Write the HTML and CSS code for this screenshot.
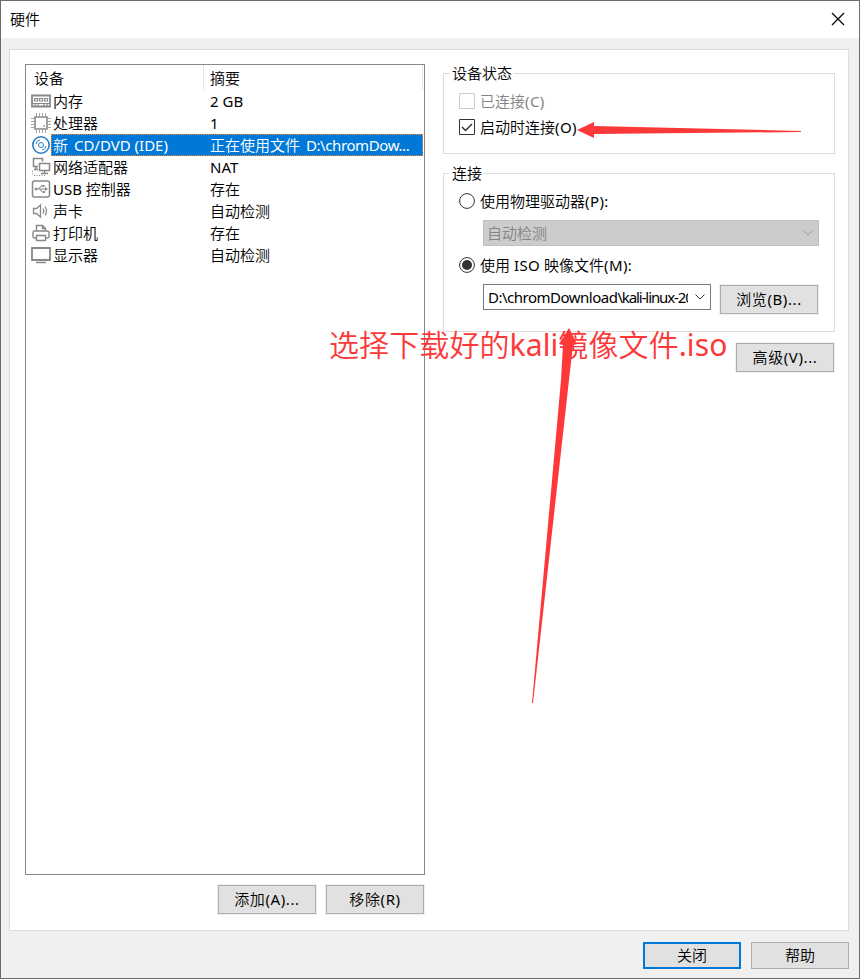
FILE: index.html
```
<!DOCTYPE html>
<html lang="zh-CN">

<head>
    <meta charset="UTF-8">
    <meta name="viewport" content="width=device-width, initial-scale=1.0">
    <title>硬件</title>
    <link rel="stylesheet" href="styles.css">
</head>

<body>
    <div class="window">
        <div class="titlebar">
            <span>硬件</span>
            <svg class="close" width="14" height="14" viewBox="0 0 14 14"><path d="M1 1l12 12M13 1L1 13"/></svg>
        </div>

        <div class="panel">
            <div class="left">
                <div class="device-list">
                    <div class="list-header">
                        <div class="col-device">设备</div>
                        <div class="col-summary">摘要</div>
                    </div>
                    <div class="row">
                        <svg class="icon" width="20" height="20" viewBox="0 0 20 20"><path d="M1 4.500h18v11H1z" stroke-width="1.800"/><path d="M1 12.500h18M4 13v2M7 13v2M13 13v2M16 13v2" stroke-width="1.200"/><path d="M3.500 7.500h3v2.500h-3zM8.500 7.500h3v2.500h-3zM13.500 7.500h3v2.500h-3z" stroke-width="1.200"/></svg>
                        <div class="name">内存</div>
                        <div class="summary">2 GB</div>
                    </div>
                    <div class="row">
                        <svg class="icon" width="20" height="20" viewBox="0 0 20 20"><path d="M4 4h12v12H4z" stroke-width="1.600"/><path d="M5.500 0v3M8.500 0v3M11.500 0v3M14.500 0v3M5.500 17v3M8.500 17v3M11.500 17v3M14.500 17v3M0 5.500h3M0 8.500h3M0 11.500h3M0 14.500h3M17 5.500h3M17 8.500h3M17 11.500h3M17 14.500h3" stroke-width="1" stroke-opacity=".75"/><circle cx="13" cy="13" r=".5"/></svg>
                        <div class="name">处理器</div>
                        <div class="summary">1</div>
                    </div>
                    <div class="row selected">
                        <svg class="icon" width="20" height="20" viewBox="0 0 20 20"><circle cx="10" cy="10" r="8.200" stroke-width="1.600"/><circle cx="10" cy="10" r="2.500"/><path d="M5 9a5 5 0 0 1 4-4M11 15a5 5 0 0 0 4-4" /></svg>
                        <div class="name">新 <span class="cd">CD/DVD (IDE)</span></div>
                        <div class="summary">正在使用文件 <span class="path">D:\chromDow...</span></div>
                    </div>
                    <div class="row">
                        <svg class="icon" width="20" height="20" viewBox="0 0 20 20"><path d="M7 9.500H2.500V1.500h9v3M5 10v3M3 12.500h4" stroke-width="1.500"/><path d="M8.500 6.500h10v7h-10zM13.500 14v2.500M10 16.500h7" stroke-width="1.500"/><path d="M1.500 14v5M3 18.500h11" stroke-dasharray="1 1.500"/></svg>
                        <div class="name">网络适配器</div>
                        <div class="summary">NAT</div>
                    </div>
                    <div class="row">
                        <svg class="icon" width="20" height="20" viewBox="0 0 20 20"><rect x="1.500" y="2" width="17" height="16" rx="2" stroke-width="1.500"/><path d="M5 10h9M7.500 10l2.500-3h2M9 10l2 3h2"/><path d="M14 8l3 2-3 2zM11.500 6h2v2h-2zM12 12h2v2h-2z" fill="#888" stroke="none"/><circle cx="5" cy="10" r="1" fill="#888"/></svg>
                        <div class="name">USB 控制器</div>
                        <div class="summary">存在</div>
                    </div>
                    <div class="row">
                        <svg class="icon" width="20" height="20" viewBox="0 0 20 20"><path d="M2.500 7.500h3l4-3.500v12l-4-3.500h-3z" stroke-width="1.300"/><path d="M12 7.500q1.800 2.500 0 5M14 5.500q3 4.500 0 9" stroke-width="1.200"/></svg>
                        <div class="name">声卡</div>
                        <div class="summary">自动检测</div>
                    </div>
                    <div class="row">
                        <svg class="icon" width="20" height="20" viewBox="0 0 20 20"><path d="M5.500 8V2.500h6l3 3V8M11.500 2.500v3h3M5 15H3.500q-1.500 0-1.500-1.500v-4Q2 8 3.500 8h13q1.500 0 1.500 1.500v4q0 1.500-1.500 1.500H15M5.500 12.500h9v5h-9z" stroke-width="1.400"/></svg>
                        <div class="name">打印机</div>
                        <div class="summary">存在</div>
                    </div>
                    <div class="row">
                        <svg class="icon" width="20" height="20" viewBox="0 0 20 20"><path d="M1 3h18v12H1z" stroke-width="1.800"/><path d="M5 17.500h10" stroke-width="1.500"/></svg>
                        <div class="name">显示器</div>
                        <div class="summary">自动检测</div>
                    </div>
                </div>
                <div class="list-buttons">
                    <button class="framed">添加(A)...</button>
                    <button class="framed">移除(R)</button>
                </div>
            </div>

            <div class="right">
                <fieldset class="status">
                    <legend>设备状态</legend>
                    <label class="option disabled">
                        <svg width="16" height="16" viewBox="0 0 16 16"><path d="M.5.5h15v15H.5z"/></svg>
                        <span>已连接<span class="key">(C)</span></span>
                    </label>
                    <label class="option">
                        <svg width="16" height="16" viewBox="0 0 16 16"><path d="M.5.5h15v15H.5z"/><path d="M3 8l3.500 3.500L13 5" stroke-width="1.500"/></svg>
                        <span>启动时连接<span class="key">(O)</span></span>
                    </label>
                </fieldset>

                <fieldset class="connection">
                    <legend>连接</legend>
                    <label class="option">
                        <svg width="16" height="16" viewBox="0 0 16 16"><circle cx="8" cy="8" r="7.400"/></svg>
                        <span>使用物理驱动器<span class="key">(P):</span></span>
                    </label>
                    <div class="combo off">
                        <span>自动检测</span>
                        <svg width="10" height="6" viewBox="0 0 10 6"><path d="M.5.5L5 5 9.500.5"/></svg>
                    </div>
                    <label class="option">
                        <svg width="16" height="16" viewBox="0 0 16 16"><circle cx="8" cy="8" r="7.400"/><circle cx="8" cy="8" r="5" fill="#333" stroke="none"/></svg>
                        <span>使用 <span class="key">ISO</span> 映像文件<span class="key">(M):</span></span>
                    </label>
                    <div class="iso-row">
                        <div class="combo">
                            <span class="value">D:\chromDownload<span class="file">\kali-linux-20</span></span>
                            <svg width="10" height="6" viewBox="0 0 10 6"><path d="M.5.5L5 5 9.500.5"/></svg>
                        </div>
                        <button class="framed">浏览(B)...</button>
                    </div>
                </fieldset>
                <button class="framed advanced">高级(V)...</button>
            </div>
        </div>

        <div class="footer">
            <button class="default">关闭</button>
            <button>帮助</button>
        </div>
    </div>

    <!-- red annotations over the dialog -->
    <div class="note">选择下载好的kali镜像文件.iso</div>
    <svg class="arrows" width="860" height="979" viewBox="0 0 860 979">
        <path d="M577 130l17-8v4l207 5v1l-207 2v4z"/>
        <path d="M569 328l8 16-4 1-4 35-36 323h-1l29-323 2-35-4-1z"/>
    </svg>
</body>

</html>
```

FILE: styles.css
```
* {
    box-sizing: border-box;
}

body {
    margin: 0;
    position: relative;
    font-family: "Noto Sans", "Noto Sans CJK SC DemiLight", "Noto Sans CJK SC", sans-serif;
    font-size: 15px;
    line-height: 22px;
    color: #000;
}

svg {
    display: block;
    flex: none;
    fill: none;
    stroke: #333;
}

.window {
    display: flex;
    flex-direction: column;
    width: 860px;
    height: 979px;
    border: 1px solid #6b6b6b;
    background-color: #f0f0f0;
    overflow: hidden;
}

.titlebar {
    display: flex;
    justify-content: space-between;
    align-items: center;
    height: 37px;
    padding: 0 14px 1px 9px;
    background-color: #fff;
}

.close {
    stroke: #000;
    stroke-width: 1.2;
}

.panel {
    display: flex;
    gap: 18px;
    width: 840px;
    height: 882px;
    margin: 11px 0 0 8px;
    padding: 14px 13px 0 15px;
    border: 1px solid #dcdcdc;
    background-color: #fff;
}

.left {
    width: 400px;
}

.device-list {
    height: 811px;
    padding: 0 1px;
    border: 1px solid #828790;
}

.list-header {
    display: flex;
    height: 25px;
    line-height: 26px;
}

.col-device {
    width: 177px;
    padding-left: 7px;
    border-right: 1px solid #e5e5e5;
}

.col-summary {
    flex: 1;
    padding-left: 6px;
    border-right: 1px solid #e5e5e5;
}

.row {
    display: flex;
    height: 22px;
    padding-left: 4px;
    white-space: pre;
}

.icon {
    margin: 1px 0;
    stroke: #888;
}

.name {
    width: 153px;
    padding-left: 2px;
}

.summary {
    flex: 1;
    padding-left: 6px;
}

.selected .icon {
    stroke: #2b7cc4;
}

.selected .name,
.selected .summary {
    background-color: #0078d7;
    color: #fff;
    border: 1px dotted #ff8728;
    line-height: 20px;
}

.selected .name {
    border-right: none;
    padding-left: 1px;
}

.selected .summary {
    border-left: none;
}

.cd {
    margin-left: 2px;
}

.path {
    margin-left: 2px;
    letter-spacing: -0.4px;
}

.list-buttons {
    display: flex;
    justify-content: flex-end;
    gap: 10px;
    margin-top: 10px;
    padding-right: 1px;
}

button {
    width: 98px;
    height: 27px;
    padding: 0 0 2px;
    border: 1px solid #adadad;
    background-color: #e1e1e1;
    font: inherit;
    line-height: 22px;
    color: #000;
}

.framed {
    height: 29px;
    box-shadow: 0 0 0 1px #f0f0f0;
    letter-spacing: 0.6px;
}

.default {
    border: 2px solid #0078d7;
}

.right {
    width: 392px;
    padding-top: 9px;
}

fieldset {
    position: relative;
    margin: 0;
    padding: 0 15px;
    border: 1px solid #dcdcdc;
}

legend {
    position: absolute;
    top: -12px;
    left: 6px;
    padding: 0 2px;
    background-color: #fff;
}

.status {
    height: 81px;
    padding-top: 16px;
}

.connection {
    height: 159px;
    margin-top: 19px;
    padding-top: 16px;
}

.option {
    display: flex;
    align-items: center;
    gap: 5px;
    height: 22px;
}

.status .option + .option {
    margin-top: 4px;
}

.key {
    letter-spacing: 0.4px;
}

.disabled {
    color: #838383;
}

.disabled svg {
    stroke: #ccc;
}

.combo {
    display: flex;
    align-items: center;
    justify-content: space-between;
    width: 228px;
    height: 26px;
    padding: 0 5px 0 4px;
    border: 1px solid #7a7a7a;
}

.combo.off {
    width: 336px;
    height: 26px;
    margin: 8px 0 8px 24px;
    padding-left: 3px;
    border-color: #bfbfbf;
    background-color: #ccc;
    color: #838383;
}

.off svg {
    stroke: #a0a0a0;
}

.value {
    width: 200px;
    overflow: hidden;
    white-space: nowrap;
    letter-spacing: -0.5px;
}

.file {
    letter-spacing: -1.1px;
}

.iso-row {
    display: flex;
    gap: 9px;
    margin: 8px 0 0 24px;
}

.iso-row .framed {
    margin-top: 1px;
}

.advanced {
    display: block;
    margin: 11px 1px 0 auto;
}

.footer {
    display: flex;
    justify-content: flex-end;
    gap: 10px;
    padding: 11px 10px 0 0;
}

.note {
    position: absolute;
    top: 323px;
    left: 329px;
    font-size: 30px;
    letter-spacing: 0.1px;
    line-height: 44px;
    white-space: nowrap;
    color: #fd3838;
}

.arrows {
    position: absolute;
    top: 0;
    left: 0;
    fill: #fd3838;
    stroke: none;
    pointer-events: none;
}
```
